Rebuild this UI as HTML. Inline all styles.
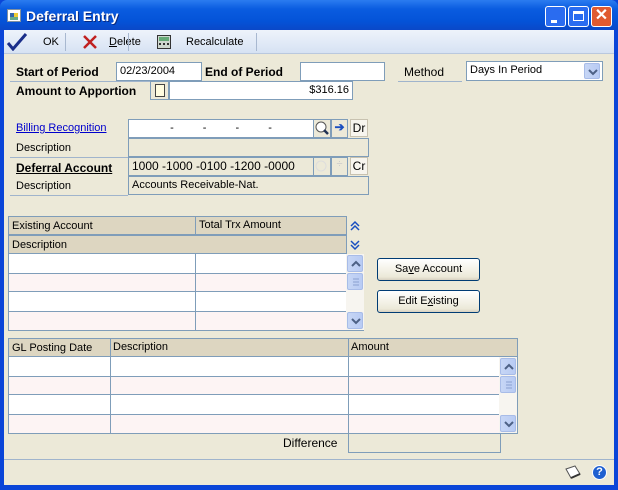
<!DOCTYPE html>
<html><head><style>
*{box-sizing:border-box;margin:0;padding:0}
body{width:618px;height:490px;overflow:hidden;font-family:"Liberation Sans",sans-serif;font-size:11px;color:#000;background:#0a45d8;position:relative}
.a{position:absolute}
.win{left:4px;top:30px;width:610px;height:455px;background:#ece9d8}
.title{left:0;top:0;width:618px;height:30px;background:linear-gradient(#2b7cf0,#0a5ce0 30%,#0453d8 70%,#0a48c8);border-radius:7px 7px 0 0}
.tb{left:4px;top:30px;width:610px;height:24px;background:linear-gradient(#eef3fb,#d6e2f3);border-bottom:1px solid #b9c8de}
.sep{width:1px;height:18px;top:33px;background:#a8b8d0}
.in{background:#fff;border:1px solid #7f9db9;height:19px;padding:2px 3px;white-space:nowrap}
.gr{background:#ece9d8;border:1px solid #7f9db9;height:19px;padding:2px 3px}
.b{font-weight:bold;font-size:12px}
.line{height:1px;background:#a0b4cc}
.hd{background:#ddd6c1;border:1px solid #7f9db9;height:19px;padding:3px 3px}
.btn{border:1px solid #003c74;border-radius:3px;background:linear-gradient(#fff,#ece9d8 85%,#d6d0c0);text-align:center;padding-top:4px;height:23px}
.sb{background:linear-gradient(90deg,#c7d6f5,#b8cbf4);border:1px solid #a8bce8;border-radius:2px;width:16px;height:17px}
.sb svg{position:absolute;left:3px;top:4px}
.sm{width:18px;height:18px;border:1px solid #c8c2b0;background:#f7f5ee;text-align:center;font-size:12px;line-height:16px}
</style></head><body>
<div class="a title"></div>
<div class="a" style="left:7px;top:9px;width:14px;height:13px;background:#fff;border:1px solid #8090a0"><div class="a" style="left:2px;top:3px;width:4px;height:4px;background:#36a"></div><div class="a" style="left:6px;top:3px;width:4px;height:4px;background:#ec3"></div><div class="a" style="left:2px;top:7px;width:8px;height:3px;background:#6a8"></div></div>
<div class="a" style="left:26px;top:8px;color:#fff;font-weight:bold;font-size:14px;text-shadow:1px 1px #0a2a80">Deferral Entry</div>
<div class="a" style="left:545px;top:6px;width:21px;height:21px;background:#2a6cf0;border:1px solid #fff;border-radius:3px"><div class="a" style="left:5px;top:13px;width:6px;height:3px;background:#fff"></div></div>
<div class="a" style="left:568px;top:6px;width:21px;height:21px;background:#2a6cf0;border:1px solid #fff;border-radius:3px"><div class="a" style="left:4px;top:4px;width:11px;height:10px;border:1px solid #fff;border-top:3px solid #fff"></div></div>
<div class="a" style="left:591px;top:6px;width:21px;height:21px;background:#e05a30;border:1px solid #fff;border-radius:3px;color:#fff;font-size:16px;font-weight:bold;text-align:center;line-height:18px">✕</div>
<div class="a win"></div>
<div class="a tb"></div>
<svg class="a" style="left:6px;top:33px" width="22" height="18"><path d="M2 10 L7 16 L20 1" stroke="#1a2e8a" stroke-width="3" fill="none"/></svg>
<div class="a" style="left:43px;top:36px">OK</div>
<div class="a sep" style="left:65px"></div>
<svg class="a" style="left:82px;top:34px" width="16" height="16"><path d="M2 2L14 14M14 2L2 14" stroke="#c02020" stroke-width="2.5"/></svg>
<div class="a" style="left:109px;top:36px"><u>D</u>elete</div>
<div class="a sep" style="left:128px"></div>
<div class="a" style="left:157px;top:35px;width:14px;height:14px;border:1px solid #333;background:#cfd8cf"><div class="a" style="left:1px;top:1px;width:10px;height:4px;background:#6a7"></div><div class="a" style="left:1px;top:7px;width:10px;height:4px;border-top:2px dotted #333"></div></div>
<div class="a" style="left:186px;top:36px">Recalculate</div>
<div class="a sep" style="left:256px"></div>

<div class="a b" style="left:16px;top:65px">Start of Period</div>
<div class="a in" style="left:116px;top:62px;width:86px">02/23/2004</div>
<div class="a b" style="left:205px;top:65px">End of Period</div>
<div class="a in" style="left:300px;top:62px;width:85px"></div>
<div class="a line" style="left:10px;top:81px;width:290px"></div>
<div class="a" style="left:404px;top:65px;font-size:12px">Method</div>
<div class="a line" style="left:398px;top:81px;width:64px"></div>
<div class="a in" style="left:466px;top:61px;width:137px;height:20px">Days In Period</div>
<div class="a sb" style="left:584px;top:63px;height:16px"><svg width="10" height="8"><path d="M1 2L5 6L9 2" stroke="#4d6185" stroke-width="2" fill="none"/></svg></div>
<div class="a b" style="left:16px;top:84px">Amount to Apportion</div>
<div class="a" style="left:150px;top:81px;width:19px;height:19px;border:1px solid #7f9db9;background:#ece9d8"><div class="a" style="left:4px;top:2px;width:10px;height:13px;border:1px solid #444;background:#fffce0"></div></div>
<div class="a in" style="left:169px;top:81px;width:184px;text-align:right">$316.16</div>

<div class="a" style="left:16px;top:122px;color:#00c;text-decoration:underline">Billing Recognition</div>
<div class="a in" style="left:128px;top:119px;width:186px;text-align:center;word-spacing:26px">- - - -</div>
<div class="a" style="left:313px;top:119px;width:18px;height:19px;border:1px solid #7f9db9;background:#ece9d8"><svg width="16" height="16"><circle cx="7" cy="7" r="5" fill="#fff" stroke="#555"/><path d="M10 10L14 14" stroke="#235" stroke-width="2.5"/></svg></div>
<div class="a" style="left:331px;top:119px;width:17px;height:19px;border:1px solid #7f9db9;color:#1a4fc0;font-weight:bold;text-align:center;font-size:12px">➔</div>
<div class="a sm" style="left:350px;top:119px">Dr</div>
<div class="a" style="left:16px;top:142px">Description</div>
<div class="a gr" style="left:128px;top:138px;width:241px"></div>
<div class="a line" style="left:10px;top:157px;width:118px"></div>
<div class="a b" style="left:16px;top:161px;text-decoration:underline">Deferral Account</div>
<div class="a gr" style="left:128px;top:157px;width:186px;font-size:12px;padding-top:1px">1000 -1000 -0100 -1200 -0000</div>
<div class="a" style="left:313px;top:157px;width:18px;height:19px;border:1px solid #7f9db9"><svg width="16" height="16"><circle cx="7" cy="8" r="5" fill="none" stroke="#ddd"/></svg></div>
<div class="a" style="left:331px;top:157px;width:17px;height:19px;border:1px solid #7f9db9;color:#ccc;text-align:center">÷</div>
<div class="a sm" style="left:350px;top:157px">Cr</div>
<div class="a" style="left:16px;top:180px">Description</div>
<div class="a gr" style="left:128px;top:176px;width:241px">Accounts Receivable-Nat.</div>
<div class="a line" style="left:10px;top:195px;width:118px"></div>

<div class="a" style="left:8px;top:216px;width:356px;height:115px;border:1px solid #7f9db9;background:#fff">
 <div class="a hd" style="left:-1px;top:-1px;width:339px;border-right:none">Existing Account</div>
 <div class="a" style="left:186px;top:0;width:1px;height:113px;background:#7f9db9"></div>
 <div class="a" style="left:190px;top:2px">Total Trx Amount</div>
 <div class="a hd" style="left:-1px;top:18px;width:339px;border-right:none">Description</div>
 <div class="a" style="left:337px;top:-1px;width:18px;height:38px;background:#ece9d8;border-left:1px solid #7f9db9"></div>
 <svg class="a" style="left:341px;top:3px" width="10" height="12"><path d="M1 6L5 2L9 6M1 10L5 6L9 10" stroke="#1a4fc0" stroke-width="1.5" fill="none"/></svg>
 <svg class="a" style="left:341px;top:22px" width="10" height="12"><path d="M1 2L5 6L9 2M1 6L5 10L9 6" stroke="#1a4fc0" stroke-width="1.5" fill="none"/></svg>
 <div class="a" style="left:0;top:56px;width:337px;height:19px;background:#fdf4f4;border-top:1px solid #7f9db9;border-bottom:1px solid #7f9db9"></div>
 <div class="a" style="left:0;top:94px;width:337px;height:19px;background:#fdf4f4;border-top:1px solid #7f9db9"></div>
 <div class="a" style="left:186px;top:37px;width:1px;height:76px;background:#7f9db9"></div>
 <div class="a" style="left:337px;top:37px;width:18px;height:76px;background:#f7f5f0"></div>
 <div class="a sb" style="left:338px;top:38px"><svg width="10" height="8"><path d="M1 6L5 2L9 6" stroke="#4d6185" stroke-width="2" fill="none"/></svg></div>
 <div class="a sb" style="left:338px;top:56px"><svg width="10" height="8"><path d="M2 1H8M2 4H8M2 7H8" stroke="#8aa0d0" stroke-width="1"/></svg></div>
 <div class="a sb" style="left:338px;top:95px"><svg width="10" height="8"><path d="M1 2L5 6L9 2" stroke="#4d6185" stroke-width="2" fill="none"/></svg></div>
</div>
<div class="a btn" style="left:377px;top:258px;width:103px">Sa<u>v</u>e Account</div>
<div class="a btn" style="left:377px;top:290px;width:103px">Edit E<u>x</u>isting</div>

<div class="a" style="left:8px;top:338px;width:510px;height:96px;border:1px solid #7f9db9;background:#fff">
 <div class="a hd" style="left:-1px;top:-1px;width:510px">GL Posting Date</div>
 <div class="a" style="left:104px;top:2px">Description</div>
 <div class="a" style="left:342px;top:2px">Amount</div>
 <div class="a" style="left:101px;top:0;width:1px;height:94px;background:#7f9db9"></div>
 <div class="a" style="left:339px;top:0;width:1px;height:94px;background:#7f9db9"></div>
 <div class="a" style="left:0;top:37px;width:490px;height:19px;background:#fdf4f4;border-top:1px solid #7f9db9;border-bottom:1px solid #7f9db9"></div>
 <div class="a" style="left:0;top:75px;width:490px;height:19px;background:#fdf4f4;border-top:1px solid #7f9db9"></div>
 <div class="a" style="left:101px;top:18px;width:1px;height:76px;background:#7f9db9"></div>
 <div class="a" style="left:339px;top:18px;width:1px;height:76px;background:#7f9db9"></div>
 <div class="a" style="left:490px;top:18px;width:18px;height:76px;background:#f7f5f0"></div>
 <div class="a sb" style="left:491px;top:19px"><svg width="10" height="8"><path d="M1 6L5 2L9 6" stroke="#4d6185" stroke-width="2" fill="none"/></svg></div>
 <div class="a sb" style="left:491px;top:37px"><svg width="10" height="8"><path d="M2 1H8M2 4H8M2 7H8" stroke="#8aa0d0" stroke-width="1"/></svg></div>
 <div class="a sb" style="left:491px;top:76px"><svg width="10" height="8"><path d="M1 2L5 6L9 2" stroke="#4d6185" stroke-width="2" fill="none"/></svg></div>
</div>
<div class="a" style="left:283px;top:436px;font-size:12px">Difference</div>
<div class="a gr" style="left:348px;top:433px;width:153px;height:20px"></div>

<div class="a line" style="left:4px;top:459px;width:610px"></div>
<svg class="a" style="left:563px;top:463px" width="20" height="18"><path d="M3 6L12 3L17 11L8 15Z" fill="#fff" stroke="#555"/><path d="M8 15L17 11" stroke="#333" stroke-width="2"/></svg>
<div class="a" style="left:592px;top:465px;width:15px;height:15px;border-radius:50%;background:#2060d0;border:1px solid #fff;color:#fff;font-weight:bold;font-size:11px;text-align:center;line-height:13px">?</div>
</body></html>
